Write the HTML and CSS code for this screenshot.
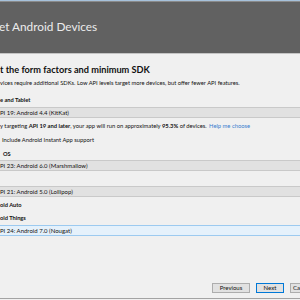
FILE: index.html
```html
<!DOCTYPE html>
<html lang="en">
<head>
  <meta charset="UTF-8" />
  <meta name="viewport" content="width=device-width, initial-scale=1.0" />
  <title>Target Android Devices</title>
  <link rel="stylesheet" href="styles.css">
</head>
<body>

  <!-- Wizard header -->
  <div class="header">
    <div class="header-title">et Android Devices</div>
  </div>

  <!-- Form factors -->
  <div class="content">
    <div class="subtitle">t the form factors and minimum SDK</div>
    <div class="desc">vices require additional SDKs. Low API levels target more devices, but offer fewer API features.</div>

    <div class="label label-phone">e and Tablet</div>
    <div class="combo">PI 19: Android 4.4 (KitKat)</div>
    <div class="info">y targeting <b>API 19 and later</b>, your app will run on approximately <b>95.3%</b> of devices. <a href="#" class="help">Help me choose</a></div>
    <div class="check">Include Android Instant App support</div>

    <div class="label label-wear">OS</div>
    <div class="combo">PI 23: Android 6.0 (Marshmallow)</div>

    <div class="label label-tv"></div>
    <div class="combo">PI 21: Android 5.0 (Lollipop)</div>

    <div class="label label-auto">oid Auto</div>
    <div class="label label-things">oid Things</div>
    <div class="combo combo-active">PI 24: Android 7.0 (Nougat)</div>
  </div>

  <!-- Buttons -->
  <div class="footer">
    <button class="btn">Previous</button>
    <button class="btn btn-default">Next</button>
    <button class="btn btn-cancel">Cancel</button>
  </div>

</body>
</html>
```

FILE: styles.css
```css
html, body {
  margin: 0;
  padding: 0;
}

body {
  width: 300px;
  height: 300px;
  overflow: hidden;
  display: flex;
  flex-direction: column;
  background-color: #f0f0f0;
  font-family: Lato, "Noto Sans", sans-serif;
  color: #111;
}

.header {
  height: 52px;
  background-color: #616161;
  border-top: 1px solid #a6c1db;
  border-bottom: 1px solid #c4c4c4;
  box-shadow: inset 0 1px 0 #8a8a8a;
  display: flex;
  align-items: center;
}

.header-title {
  color: #ececec;
  font-size: 11.8px;
  margin-left: -1px;
  margin-top: -2px;
}

.content {
  padding-top: 9px;
  display: flex;
  flex-direction: column;
}

.subtitle {
  height: 14px;
  line-height: 14px;
  font-size: 9.2px;
  font-weight: bold;
  white-space: nowrap;
}

.desc {
  height: 12px;
  line-height: 12px;
  font-size: 5.8px;
  white-space: nowrap;
}

.label {
  font-size: 5.7px;
  font-weight: bold;
  white-space: nowrap;
}

.label-phone {
  height: 18px;
  line-height: 14px;
  padding-top: 4px;
  box-sizing: border-box;
}

.label-wear {
  height: 13px;
  line-height: 13px;
  padding-left: 3px;
}

.label-tv {
  height: 15px;
}

.label-auto {
  height: 14px;
  line-height: 14px;
  margin-top: 1px;
}

.label-things {
  height: 12px;
  line-height: 12px;
}

.combo {
  height: 11px;
  line-height: 9px;
  box-sizing: border-box;
  background-color: #e1e1e1;
  border-top: 1px solid #c9c9c9;
  border-bottom: 1px solid #c9c9c9;
  font-size: 6px;
  white-space: nowrap;
}

.combo-active {
  margin-top: 1px;
  background-color: #e5f1fb;
  border-color: #9ccaf0;
}

.info {
  height: 15px;
  line-height: 15px;
  font-size: 5.8px;
  white-space: nowrap;
}

.help {
  color: #3a7fcf;
  text-decoration: none;
  margin-left: 1px;
}

.check {
  height: 14px;
  line-height: 14px;
  padding-left: 2px;
  font-size: 5.8px;
  white-space: nowrap;
}

.footer {
  margin-top: auto;
  height: 15px;
  display: flex;
  gap: 6px;
  padding-left: 212px;
  border-bottom: 1px solid #a3a3a3;
  margin-bottom: 1px;
}

.btn {
  flex: none;
  width: 38px;
  height: 10px;
  padding: 0;
  font-family: Lato, "Noto Sans", sans-serif;
  font-size: 6px;
  line-height: 8px;
  color: #111;
  background-color: #e1e1e1;
  border: 1px solid #adadad;
}

.btn-default {
  width: 28px;
  border-color: #0078d7;
}

.btn-cancel {
  flex: 1;
  width: auto;
  min-width: 0;
  overflow: hidden;
  text-align: left;
  padding-left: 2px;
  border-right: none;
}
```
